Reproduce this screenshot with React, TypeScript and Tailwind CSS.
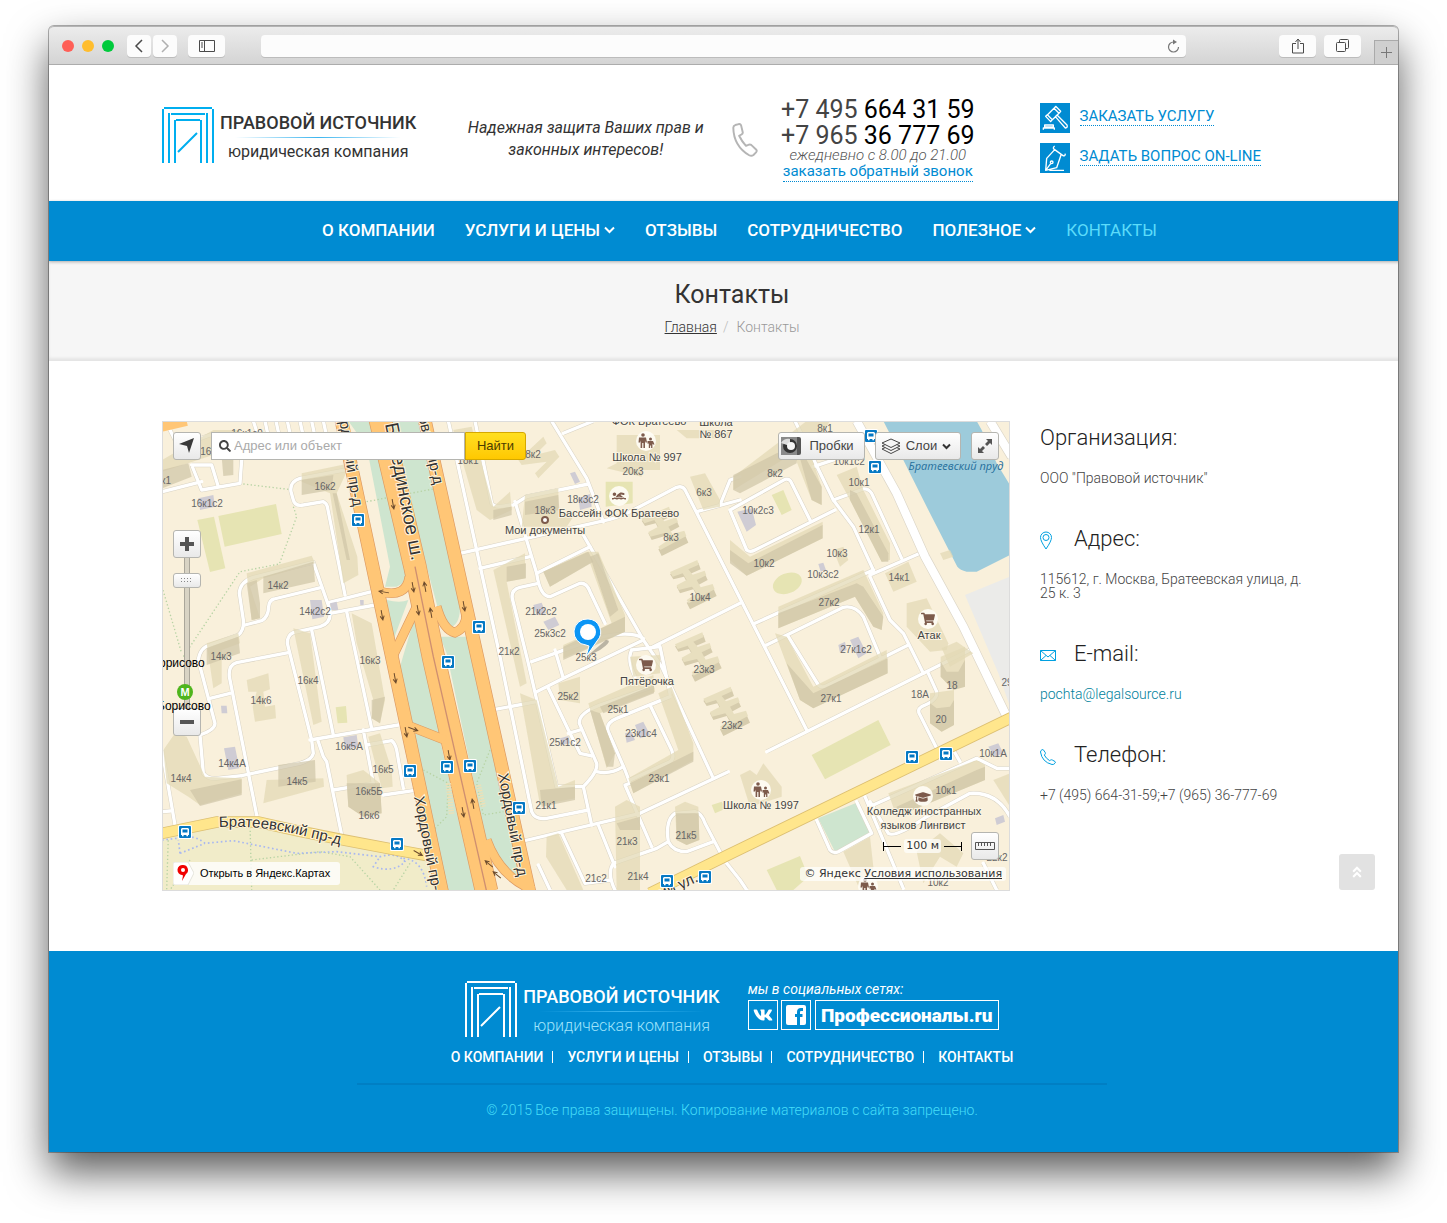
import React from "react";
import { FaSearch, FaVk, FaAngleDoubleUp, FaGraduationCap, FaShoppingCart, FaSwimmer } from "react-icons/fa";

/* ---------- Map data (drawing units: three per map pixel) ---------- */

const greenStrips = [
  "M595,33 L675,33 L770,470 Q775,520 740,530 L705,530 L720,470 L650,110Z",
  "M715,33 L805,33 L930,590 Q930,640 905,650 Q880,640 865,600 L830,470Z",
  "M710,570 Q750,580 775,570 L730,690Z",
  "M800,600 L880,980 L785,940 L750,770Z",
  "M870,680 L965,680 L1140,1440 Q1040,1400 1010,1300 L890,730Z",
  "M775,965 L870,990 L975,1440 L885,1440Z",
  "M2005,1225 L2120,1178 L2165,1270 L2055,1325Z",
];

const fields = [
  "142,330 192,320 226,475 180,486",
  "205,318 378,282 395,372 224,410",
  "557,892 588,888 592,938 563,940",
  "1865,255 1900,240 1925,300 1895,315",
  "1985,1035 2185,930 2222,1005 2025,1108",
  "1850,1380 1950,1338 1975,1400 1930,1440 1880,1440",
  "1685,1185 1715,1175 1730,1195 1695,1210",
  "1367,215 1448,215 1448,280 1367,290",
];

const roofs = [
  "37,150 190,60 270,60 250,115 37,185",
  "455,190 600,160 590,185 560,250 622,440 625,495 580,520 540,250 455,215",
  "290,490 485,437 495,460 340,505 300,530 330,625 305,630",
  "170,700 265,670 270,700 215,720 215,820 190,835",
  "605,610 665,640 705,870 690,940 665,925 670,870 620,700",
  "430,655 480,670 515,935 490,945",
  "40,1020 75,970 110,980 165,1100 275,1105 275,1150 150,1185 115,1160 50,1120",
  "350,1110 520,1105 522,1130 340,1180",
  "290,810 355,790 360,838 340,845 345,890 375,885 378,925 315,935 308,890 320,845 295,845",
  "655,980 690,970 725,1080 728,1130 695,1135",
  "590,1095 640,1080 690,1120 695,1210 640,1220 595,1190",
  "910,60 965,50 1030,290 1080,245 1085,300 1020,330 980,300",
  "1105,150 1180,80 1190,100 1155,135 1215,120 1228,140 1165,205 1155,190 1190,155 1115,165",
  "1125,255 1225,235 1225,300 1270,320 1250,350 1115,350",
  "1400,75 1530,75 1530,180 1475,180 1475,200 1370,175 1400,160",
  "1580,60 1740,60 1740,85 1610,85",
  "1620,200 1665,190 1710,270 1710,290 1660,300",
  "1180,485 1310,425 1345,425 1425,615 1425,665 1240,745 1240,705 1385,640 1320,460 1200,530",
  "1030,480 1125,430 1125,505 1070,515 1130,820 1110,830",
  "1110,850 1160,870 1225,1130 1275,1110 1275,1165 1170,1185",
  "1225,820 1290,800 1290,880 1230,870",
  "1315,880 1510,795 1515,845 1350,910 1395,1030 1370,1075",
  "1440,740 1530,735 1530,790 1450,800",
  "1525,850 1565,830 1630,1000 1630,1050 1450,1150 1435,1105 1585,1020",
  "1395,1190 1430,1170 1470,1190 1470,1440 1400,1440",
  "1575,1190 1605,1175 1645,1190 1648,1290 1610,1305 1580,1290",
  "1190,1280 1225,1270 1300,1440 1250,1440 1188,1340",
  "1970,33 2040,33 1980,130 2015,230 2015,285 1985,270 1930,130 1750,240 1750,200",
  "1740,390 1800,440 2018,335 2018,385 1790,497 1740,450",
  "2060,195 2120,170 2140,240 2220,400 2220,450 2195,455 2100,270",
  "2050,420 2080,410 2095,450 2070,470",
  "1885,590 2140,480 2200,610 2195,660 2170,650 2115,560 1885,655",
  "2205,490 2275,455 2300,515 2230,545",
  "2270,580 2330,565 2395,700 2390,720 2340,725 2270,650",
  "1875,670 1910,680 1990,830 2210,720 2213,790 1990,895 1950,870",
  "2372,740 2445,710 2445,830 2410,840 2372,800",
  "2340,850 2412,840 2412,945 2375,965 2340,940",
  "1770,1095 1800,1080 1820,1095 1840,1060 1895,1130 1895,1160 1800,1190",
  "2215,1150 2480,1050 2505,1065 2505,1110 2240,1220",
  "2530,1110 2580,1090 2580,1190",
  "2080,1325 2160,1280 2170,1370 2160,1440 2130,1440",
  "2300,1325 2370,1270 2440,1330 2420,1370 2370,1340 2320,1420",
  "2370,430 2400,420 2410,440 2380,450",
  "2375,715 2420,695 2470,730 2400,770",
];

const walls = [
  "37,180 115,160 125,200 37,235",
  "215,140 250,140 250,195 220,198",
  "455,210 550,195 545,240 455,255",
  "548,250 560,250 600,450 590,450",
  "340,500 490,455 495,515 340,550",
  "290,520 320,510 330,580 330,625 305,630",
  "170,715 265,680 270,730 170,765",
  "120,1140 275,1108 275,1155 150,1188",
  "385,1065 495,1050 497,1115 385,1130",
  "590,1120 690,1120 695,1210 640,1220 595,1190",
  "665,870 705,860 690,940 665,925",
  "1125,275 1225,255 1228,300 1125,315",
  "1030,300 1085,290 1085,315 1030,330",
  "1070,470 1128,460 1128,505 1070,515",
  "1180,485 1315,425 1330,455 1200,530",
  "1320,440 1345,430 1405,600 1380,620",
  "1240,710 1425,620 1425,665 1240,750",
  "1320,900 1350,910 1395,1030 1390,1070 1370,1070",
  "1350,890 1512,825 1512,850 1360,910",
  "1440,1120 1630,1025 1630,1055 1450,1150",
  "1170,1140 1275,1130 1275,1170 1175,1190",
  "1400,1240 1470,1220 1470,1260 1410,1260",
  "1578,1210 1646,1210 1648,1290 1610,1305 1580,1290",
  "1950,145 1970,150 2015,230 2015,285 1985,270",
  "1750,195 1880,130 1940,110 1940,160 1770,250 1750,240",
  "1740,420 1795,460 2018,345 2018,385 1790,497 1740,460",
  "2100,240 2120,250 2215,430 2215,455 2195,455 2100,270",
  "1885,610 2120,520 2140,530 2200,620 2195,660 2170,650 2115,560 1885,655",
  "1910,760 1990,850 2213,745 2213,790 1990,895 1950,870",
  "2372,755 2390,785 2425,785 2445,750 2445,830 2410,840 2372,800",
  "2340,880 2360,895 2400,890 2412,870 2412,945 2375,965 2340,940",
  "2240,1190 2480,1080 2505,1070 2505,1110 2240,1220",
];

const annexes = [
  "480,570 515,570 522,620 487,628",
  "540,580 560,575 565,600 545,600",
  "630,570 641,570 641,585 631,585",
  "145,265 190,255 195,290 150,300",
  "213,887 230,887 232,910 215,910",
  "222,1015 255,1010 268,1075 235,1080",
  "580,982 620,975 625,1010 585,1020",
  "1260,190 1275,185 1290,215 1275,222",
  "1180,635 1215,620 1228,645 1195,660",
  "1150,585 1175,578 1188,610 1160,615",
  "1285,265 1320,252 1325,290 1290,300",
  "1455,945 1480,935 1500,975 1470,985",
  "1425,970 1445,965 1455,990 1430,998",
  "1762,305 1805,295 1818,345 1790,365",
  "2005,462 2020,458 2028,480 2012,485",
  "2100,690 2125,680 2150,730 2125,745",
  "2065,705 2085,695 2090,720 2070,728",
  "2515,1010 2545,1000 2560,1030 2535,1040",
  "2535,1225 2560,1215 2565,1235 2540,1245",
  "1230,985 1255,978 1260,1000 1235,1005",
];

/* Short comb-shaped blocks repeated over the district. */
const combs = [
  [1475, 290],
  [1560, 450],
  [1575, 667],
  [1660, 830],
];

const streets = [
  "M36,245 L155,215 M125,165 L155,240 L270,220 L275,150 M125,165 L185,165 L205,230",
  "M60,60 L85,110 L180,75 L230,75",
  "M310,33 L325,80 M345,33 L355,80 M378,33 L388,80 M412,33 L422,80 M450,33 L460,80 M485,33 L495,80 M520,33 L530,80",
  "M595,178 L450,205 Q418,215 423,245 L430,270 Q435,290 460,285 L520,275 Q530,280 532,290 L585,555",
  "M665,545 L535,578 M675,585 L540,610",
  "M145,750 Q150,712 180,705 L265,675 Q283,660 280,630 L268,550 Q270,515 310,502 L490,457 L540,600 Q545,640 510,650 L430,668 Q412,675 412,700 L485,990 L490,1030 Q485,1050 450,1060 L275,1097",
  "M285,645 L335,632 Q355,622 356,590 Q358,570 372,567 L515,532",
  "M590,605 L665,955 M485,660 L550,975",
  "M145,750 L195,940 Q195,960 150,975 L160,1090 Q175,1108 200,1105 L275,1097 M180,865 L240,850",
  "M415,728 L260,758 Q235,765 238,800 L320,1215",
  "M480,990 L745,945 M505,995 L520,1040 L530,1055 L575,1275 M550,1140 L670,1120 L640,960 M650,1005 L725,992 Q735,1000 740,1020 L760,1135 M700,1155 L790,1142",
  "M36,1020 L75,1245 M36,1205 L60,1203",
  "M895,33 L1050,740 L1145,1205 Q1155,1230 1190,1225 L1315,1200",
  "M975,33 L1025,280 Q1035,295 1080,285",
  "M930,430 L1350,335 Q1400,325 1440,305 L1580,232 Q1600,225 1608,245 L1970,960",
  "M1095,275 L1160,490 Q1170,560 1200,560 L1290,520 Q1310,518 1320,545 L1365,640",
  "M1090,285 L1130,260 L1315,222 M1205,33 L1310,205 L1360,335 M1240,70 L1330,33",
  "M1300,375 L1320,410 L1480,690 L1535,770 L1690,1105",
  "M1160,490 L1320,410 M990,475 L1140,440 M1165,520 L1110,532 Q1080,540 1088,570 L1135,760 L1220,1130 L1300,1130",
  "M1510,710 L1770,580 M1145,755 L1340,685 Q1440,660 1480,685 M1160,845 L1240,805 L1480,690 M1215,720 L1240,805",
  "M1035,898 L1160,875 M1195,835 L1260,970 L1290,1030 L1325,1038 M1255,970 L1290,960",
  "M1510,830 L1350,885 Q1285,910 1288,940 L1340,1060 Q1345,1085 1300,1130 L1325,1245 M1340,1085 Q1380,1095 1420,1070",
  "M1560,860 L1400,925 Q1365,940 1375,965 L1425,1080 L1440,1120 L1425,1125 L1505,1310 M1440,1110 L1560,1055 Q1575,1045 1565,1020 L1500,885",
  "M1120,1293 L1470,1210 L1735,1085 M1345,1245 L1395,1370 M1390,1360 L1520,1315 L1555,1295 M1555,1295 Q1545,1230 1575,1210 L1635,1205 Q1655,1210 1665,1240 L1715,1335 M1555,1295 Q1570,1325 1610,1325 L1690,1295",
  "M1235,1270 L1305,1420 L1380,1410 M1165,1365 L1200,1440 M1390,1360 Q1370,1390 1395,1440 M1730,1360 L1770,1410 L1790,1440",
  "M1445,720 Q1430,750 1455,800 M1445,720 L1530,710 L1560,850",
  "M1935,33 L2050,270 L2110,350 L2170,480 M2160,500 L2220,630 L2260,670 L2320,790",
  "M1990,170 L2140,120 M1740,300 L1905,208 Q1920,205 1925,220 L1980,330 M1740,300 L1790,420 Q1800,428 1815,420 L2055,300 M2050,270 L2140,237 Q2155,235 2165,250 L2255,445",
  "M2160,495 L2310,430 M1815,640 L2170,480 M1850,705 L2080,592 Q2115,585 2140,620 L2190,740 M1915,680 L2005,825 Q2015,835 2030,827 L2275,705",
  "M1850,1025 L2320,790 L2460,720 M2335,790 L2360,845 Q2365,870 2315,890 Q2300,900 2310,915 L2360,1015 M2410,1020 L2430,1055",
  "M2120,1175 L2165,1270 L2065,1325 Q2050,1332 2040,1320 L2000,1230 M2145,1160 L2260,1435 M2160,1175 L2215,1270 Q2235,1285 2330,1220 L2460,1150 Q2540,1145 2580,1220 M2170,1185 L2480,1045 L2540,1075 L2580,1075",
  "M1640,305 L1770,270 M1710,285 L1740,210 L1770,200 M2500,1360 L2540,1440",
];

const paths = [
  "M280,222 L415,238 M430,290 L440,320 L388,462 L270,485 L100,740 M36,530 L95,730",
  "M650,275 L860,235",
  "M55,1280 L50,1440 M300,1240 L305,1440 M305,1350 L510,1325 L600,1340 L690,1440 M120,1350 L60,1440 M780,1360 L730,1440",
  "M1020,1020 L980,1120 L1000,1215 L1060,1205 M820,1080 L895,1120 L890,1220 L850,1260",
];

const labels: [string, number, number][] = [
  ["16к1с2", 207, 507], ["16к2", 325, 490], ["14к2", 278, 589], ["14к2с2", 315, 615], ["14к3", 221, 660],
  ["16к3", 370, 664], ["16к4", 308, 684], ["14к6", 261, 704], ["16к5А", 349, 750], ["14к4А", 232, 767],
  ["16к5", 383, 773], ["14к4", 181, 782], ["14к5", 297, 785], ["16к5Б", 369, 795], ["16к6", 369, 819],
  ["18к3с2", 583, 503], ["18к3", 545, 514], ["20к3", 633, 475], ["6к3", 704, 496], ["8к3", 671, 541],
  ["10к4", 700, 601], ["21к2с2", 541, 615], ["25к3с2", 550, 637], ["21к2", 509, 655], ["25к3", 586, 661],
  ["23к3", 704, 673], ["25к2", 568, 700], ["25к1", 618, 713], ["23к2", 732, 729], ["23к1с4", 641, 737],
  ["25к1с2", 565, 746], ["23к1", 659, 782], ["21к1", 546, 809], ["21к3", 627, 845], ["21к5", 686, 839],
  ["21к4", 638, 880], ["21с2", 596, 882], ["8к2", 533, 458], ["8к1", 825, 432], ["8к2", 775, 477],
  ["10к1с2", 849, 465], ["10к1", 859, 486], ["10к2с3", 758, 514], ["12к1", 869, 533], ["10к3", 837, 557],
  ["10к2", 764, 567], ["10к3с2", 823, 578], ["14к1", 899, 581], ["27к2", 829, 606], ["27к1с2", 856, 653],
  ["27к1", 831, 702], ["18", 952, 689], ["18А", 920, 698], ["20", 941, 723], ["10к1А", 993, 757],
  ["10к1", 946, 794], ["29", 1007, 686], ["10к2", 938, 886], ["18к1", 468, 464], ["16к", 208, 455],
  ["16к1с9", 247, 437], ["к1", 166, 484], ["22к2", 997, 861],
];

const places: [string, number, number][] = [
  ["ФОК Братеево", 649, 425], ["Школа", 716, 426], ["№ 867", 716, 438], ["Школа № 997", 647, 461],
  ["Бассейн ФОК Братеево", 619, 517], ["Мои документы", 545, 534], ["Пятёрочка", 647, 685],
  ["Атак", 929, 639], ["Школа № 1997", 761, 809], ["Колледж иностранных", 924, 815], ["языков Лингвист", 923, 829],
];

const stops = [
  [358, 520], [479, 627], [448, 662], [447, 767], [470, 766], [410, 771], [519, 808], [185, 832],
  [397, 844], [667, 881], [705, 877], [912, 757], [946, 754], [871, 436], [875, 467],
];

const arrows = [
  [393, 504, 170], [384, 592, 280], [413, 587, 170], [425, 587, -10], [418, 610, 170], [431, 613, -10],
  [382, 615, 170], [395, 678, 170], [406, 732, 170], [413, 729, 110], [464, 606, 170], [449, 755, 170],
  [463, 812, 170], [473, 804, -10], [489, 864, -50], [497, 875, -50], [418, 853, 120],
];

function School({ x, y }: { x: number; y: number }) {
  return (
    <g transform={`translate(${x} ${y})`}>
      <circle r="10" fill="#fffdf6" opacity="0.9" />
      <g fill="#7d5b4c">
        <circle cx="-3" cy="-6" r="1.8" />
        <path d="M-7,-3.5 h7 l1,5 h-1.5 l-.5,-2 v7.5 h-1.6 v-5 h-1.2 v5 h-1.6 v-7.5 l-.6,2 h-1.5z" />
        <circle cx="4.5" cy="-2" r="1.5" />
        <path d="M1.5,0 h5.5 l1.5,3.5 h-1.5 l-.6,-1 v4.5 h-1.3 v-2.5 h-1 v2.5 h-1.3 v-4.5 l-1.3,.2z" />
      </g>
    </g>
  );
}

function BusStop({ x, y }: { x: number; y: number }) {
  return (
    <g transform={`translate(${x} ${y})`}>
      <rect x="-7" y="-7" width="14" height="14" rx="1.5" fill="#fff" />
      <rect x="-6" y="-6" width="12" height="12" rx="1" fill="#0679c4" />
      <path d="M-3,-4 h6 l1,1 v6 h-1 v1.300 h-1.600 v-1.300 h-2.800 v1.300 h-1.600 v-1.300 h-1 v-6z" fill="#fff" />
      <rect x="-2.500" y="-2.500" width="5" height="3" fill="#0679c4" />
    </g>
  );
}

function MapDrawing() {
  return (
    <svg
      className="absolute inset-0 h-full w-full"
      viewBox="163 422 846 468"
      preserveAspectRatio="xMinYMin slice"
      role="img"
      aria-label="Карта района Братеево"
    >
      <rect x="162" y="421" width="848" height="470" fill="#f9f0db" />
      <g transform="translate(150 410) scale(0.333333)" fill="none">
        <path d="M36,1270 L200,1240 L340,1240 L850,1350 L890,1440 L36,1440Z" fill="#f1ecc9" />
        <path d="M2445,555 L2580,500 L2580,890 L2545,790Z" fill="#ebebe9" />
        <path d="M2200,33 L2480,33 L2495,60 L2540,160 L2580,225 L2580,435 L2480,485 L2450,485 Q2430,480 2422,470 L2340,310 L2260,150Z" fill="#9dcbdb" />
        {greenStrips.map((d) => <path key={d} d={d} fill="#cee5cf" />)}
        {fields.map((p) => <polygon key={p} points={p} fill="#e6e4b3" />)}
        <ellipse cx="1912" cy="520" rx="45" ry="30" fill="#e6e4b3" transform="rotate(-22 1912 520)" />
        <g strokeWidth="4" strokeDasharray="4 7" stroke="#b7d3a4">
          {paths.map((d) => <path key={d} d={d} />)}
        </g>
        <path d="M36,1290 L80,1285 Q130,1270 165,1300 L250,1292 L440,1330 L560,1325 L690,1340 Q740,1325 765,1355 Q730,1390 670,1370 L690,1340 M90,1330 L165,1300 M90,1330 L85,1290 M760,1345 Q820,1350 830,1430" stroke="#a9b8f0" strokeWidth="5" strokeDasharray="5 8" />
        <g stroke="#d9d3c4" strokeWidth="13" strokeLinejoin="round">
          {streets.map((d) => <path key={d} d={d} />)}
        </g>
        <g stroke="#fff" strokeWidth="10" strokeLinejoin="round" strokeLinecap="round">
          {streets.map((d) => <path key={d} d={d} />)}
        </g>
        <path d="M2120,33 L2240,250 L2325,440 L2440,650 L2575,930 M2520,33 L2585,140" stroke="#dcd6c8" strokeWidth="29" />
        <path d="M2120,33 L2240,250 L2325,440 L2440,650 L2575,930 M2520,33 L2585,140" stroke="#fff" strokeWidth="25" />
        <g fill="#e3d9b6" fillOpacity="0.75">
          {roofs.map((p) => <polygon key={p} points={p} />)}
        </g>
        <g fill="#cfc5a6" fillOpacity="0.7">
          {walls.map((p) => <polygon key={p} points={p} />)}
        </g>
        {combs.map(([x, y]) => (
          <g key={`${x}-${y}`} transform={`translate(${x} ${y})`}>
            <path d="M0,42 L85,8 L92,28 L60,42 L68,55 L105,42 L113,60 L85,75 L95,95 L130,85 L140,108 L60,148 L50,128 L82,110 L70,88 L30,100 L20,80 L50,65 L42,50 L10,58Z" fill="#d6ccad" />
            <path d="M0,36 L82,0 L86,14 L55,28 L68,44 L104,32 L109,46 L80,60 L92,82 L128,72 L134,88 L56,130 L50,120 L80,100 L66,80 L26,90 L20,76 L50,60 L38,40 L8,50Z" fill="#e8dfbf" />
          </g>
        ))}
        {annexes.map((p) => <polygon key={p} points={p} fill="#cfccd4" />)}

        <path d="M36,1270 L200,1236 L325,1236 L450,1264 L570,1288 L740,1320 L850,1340 M1500,1450 L1740,1332 L2590,920" stroke="#dcbf72" strokeWidth="35" />
        <path d="M36,1270 L200,1236 L325,1236 L450,1264 L570,1288 L740,1320 L850,1340 M1500,1450 L1740,1332 L2590,920" stroke="#ffe68c" strokeWidth="30" />
        <path d="M36,50 L110,33" stroke="#ffc676" strokeWidth="30" />

        <g stroke="#dc9a63">
          <path d="M573,25 L876,1445 M823,25 L1138,1445" strokeWidth="41" />
          <path d="M690,545 Q770,565 778,500 M800,590 L728,740 M770,945 L885,990 M860,590 Q880,660 915,668 Q955,650 948,600 M1010,1290 Q1050,1400 1150,1440" strokeWidth="29" />
          <path d="M690,25 L795,470 L850,740 L1010,1445" strokeWidth="70" />
        </g>
        <g stroke="#ffc676">
          <path d="M690,25 L795,470 L850,740 L1010,1445" strokeWidth="66" />
          <path d="M573,25 L876,1445 M823,25 L1138,1445" strokeWidth="37" />
          <path d="M690,545 Q770,565 778,500 M800,590 L728,740 M770,945 L885,990 M860,590 Q880,660 915,668 Q955,650 948,600 M1010,1290 Q1050,1400 1150,1440" strokeWidth="25" />
        </g>
        <path d="M795,470 L850,740 L1010,1445" stroke="#cf8f70" strokeWidth="4" />
        <path d="M895,1120 L905,1215 M985,1125 L1000,1190" stroke="#efe0b5" strokeWidth="16" strokeDasharray="4 4" />
      </g>

      <g stroke="#6b4a2c" strokeWidth="1" fill="none">
        {arrows.map(([x, y, r]) => (
          <path key={`${x}-${y}`} d="M0,5 V-5 M-2,-1 L0,-5 L2,-1" transform={`translate(${x} ${y}) rotate(${r})`} />
        ))}
      </g>

      <g className="font-['Liberation_Sans',sans-serif] text-[10px]" fill="#666" textAnchor="middle">
        {labels.map(([t, x, y]) => <text key={`${t}${x}`} x={x} y={y}>{t}</text>)}
      </g>

      {[[619, 496], [646, 665], [928, 619], [923, 796]].map(([x, y]) => (
        <circle key={`${x}`} cx={x} cy={y} r="10" fill="#fffdf6" opacity="0.9" />
      ))}
      <School x={646} y={441} />
      <School x={761} y={790} />
      <School x={868} y={886} />
      <FaSwimmer x={612} y={489} size={14} color="#7d5b4c" />
      <FaShoppingCart x={639} y={658} size={14} color="#7d5b4c" />
      <FaShoppingCart x={921} y={612} size={14} color="#7d5b4c" />
      <FaGraduationCap x={915} y={789} size={16} color="#7d5b4c" />
      <circle cx="545" cy="520" r="3" fill="#fff" stroke="#7d5b4c" strokeWidth="2" />

      <g
        className="font-['Liberation_Sans',sans-serif] text-[11px]"
        fill="#444" stroke="#fbf4e2" strokeWidth="2" paintOrder="stroke" textAnchor="middle"
      >
        {places.map(([t, x, y]) => <text key={`${t}${y}`} x={x} y={y}>{t}</text>)}
      </g>
      <g
        className="font-['Liberation_Sans',sans-serif] text-[15px]"
        fill="#333" stroke="#fff4dc" strokeWidth="2" paintOrder="stroke"
      >
        <text transform="translate(385 424) rotate(79)" className="text-[19px]">Бесединское ш.</text>
        <text transform="translate(353 507) rotate(81)" textAnchor="end">Хордовый пр-д</text>
        <text transform="translate(434 485) rotate(77)" textAnchor="end">Хордовый пр-д</text>
        <text transform="translate(414 797) rotate(79)">Хордовый пр-д</text>
        <text transform="translate(498 774) rotate(79)">Хордовый пр-д</text>
        <text transform="translate(699 881) rotate(-25)" textAnchor="end">Братеевский ул.</text>
        <path id="brateevsky" d="M219,827 Q258,825 300,835 T350,847" fill="none" stroke="none" />
        <text><textPath href="#brateevsky">Братеевский пр-д</textPath></text>
      </g>
      <text x="956" y="470" textAnchor="middle" fill="#256f9b" className="font-['Open_Sans',sans-serif] text-[11px] italic">Братеевский пруд</text>
      {stops.map(([x, y]) => <BusStop key={`${x}-${y}`} x={x} y={y} />)}

      <path d="M586,657 L606,640 Q614,640 600,650Z" fill="#000" opacity="0.25" />
      <path d="M588,619 a13,13 0 0 0 -2,26 l3,1 -3,11 11,-16 a13,13 0 0 0 -9,-22z" fill="#0b95f5" stroke="#fff" strokeWidth="1" />
      <circle cx="588" cy="632" r="8" fill="#fff" />
    </svg>
  );
}

/* ---------- Brand ---------- */

function Logo({ light = false }: { light?: boolean }) {
  return (
    <a href="#home" className="flex w-fit items-start gap-[6px]">
      <svg width="52" height="56" viewBox="0 0 52 56" fill="none" stroke={light ? "#fff" : "#00aeef"} strokeWidth="2">
        <path d="M1,56 V2 M51,56 V2 M2,1 H50 M7,56 V6 M45,56 V6 M9,7 H43 M13,56 V13 M39,56 V13 M14,13 H38 M16,45 L35,26" />
      </svg>
      <span className={light ? "flex flex-col items-center pt-[5px] text-white" : "flex flex-col items-center pt-[5px] text-[#333]"}>
        <span className="text-[18px] leading-[22px] font-medium whitespace-nowrap">ПРАВОВОЙ ИСТОЧНИК</span>
        <span className="mt-[3px] h-px w-[166px] bg-linear-to-r from-transparent via-[#3cb5ef] to-transparent" />
        <span className={light ? "mt-[3px] text-[16px] leading-[22px] font-light text-[#9fe3fb]" : "mt-[3px] text-[16px] leading-[22px]"}>юридическая компания</span>
      </span>
    </a>
  );
}

function Handset({ className }: { className: string }) {
  return (
    <svg className={className} viewBox="0 0 80 104" fill="none" stroke="currentColor" strokeWidth="6" strokeLinejoin="round">
      <path d="M4,14 Q4,8 10,6 L21,3 Q26,2 28,7 L33,28 Q34,33 29,35 L22,39 Q30,56 43,70 L50,67 Q55,64 59,67 L74,81 Q78,85 74,90 L66,98 Q60,103 53,99 Q5,70 4,14Z" />
    </svg>
  );
}

/* ---------- Browser frame ---------- */

function BrowserBar() {
  const btn = "flex h-[22px] items-center justify-center rounded-[4px] bg-[#fcfcfc] shadow-[0_1px_0_#bcbcbc]";
  return (
    <div className="relative flex h-[39px] items-center rounded-t-[5px] border-t border-b border-t-[#b4b4b4] border-b-[#acacac] bg-linear-to-b from-[#ececec] to-[#d4d4d4] pl-[13px]">
      <span className="h-3 w-3 rounded-full bg-[#ff5f57]" />
      <span className="ml-2 h-3 w-3 rounded-full bg-[#ffbd2e]" />
      <span className="ml-2 h-3 w-3 rounded-full bg-[#00ca3c]" />
      <button aria-label="Назад" className={`${btn} ml-[13px] w-6`}>
        <svg width="10" height="14" fill="none" stroke="#4a4a4a" strokeWidth="1.5"><path d="M8,1 L2,7 L8,13" /></svg>
      </button>
      <button aria-label="Вперёд" className={`${btn} ml-[2px] w-6`}>
        <svg width="10" height="14" fill="none" stroke="#b0b0b0" strokeWidth="1.5"><path d="M2,1 L8,7 L2,13" /></svg>
      </button>
      <button aria-label="Боковая панель" className={`${btn} ml-[11px] w-[37px]`}>
        <svg width="16" height="12" fill="none" stroke="#4a4a4a"><path d="M.5,.5 h15 v11 h-15z M5.500,.5 v11 M2,3 h2 M2,5 h2 M2,7 h2" /></svg>
      </button>
      <label className={`${btn} ml-9 w-full max-w-[925px] flex-1`}>
        <input aria-label="Адресная строка" className="h-full min-w-0 flex-1 bg-transparent px-2 text-xs outline-none" />
        <svg className="mr-[6px]" width="13" height="14" fill="none" stroke="#777" strokeWidth="1.2"><path d="M6.500,3 A5,5 0 1 0 11.500,8" /><path d="M6,.5 L10,3 L6,5.500Z" fill="#777" stroke="none" /></svg>
      </label>
      <button aria-label="Поделиться" className={`${btn} mr-2 ml-auto w-[37px]`}>
        <svg width="12" height="16" fill="none" stroke="#4a4a4a"><path d="M4,5.500 H.5 v9.500 h11 V5.500 H8 M6,11 V1.500 M3.500,4 L6,1 L8.500,4" /></svg>
      </button>
      <button aria-label="Вкладки" className={`${btn} mr-[37px] w-[37px]`}>
        <svg width="13" height="13" fill="none" stroke="#4a4a4a"><rect x=".5" y="3.500" width="9" height="9" rx="1" /><path d="M3.500,3 V1.500 a1,1 0 0 1 1,-1 h7 a1,1 0 0 1 1,1 v7 a1,1 0 0 1 -1,1 h-1.500" /></svg>
      </button>
      <button aria-label="Новая вкладка" className="absolute right-0 bottom-0 flex h-6 w-6 items-center justify-center border-t border-l border-[#aaa] bg-[#cfcfcf]">
        <svg width="12" height="12" stroke="#777"><path d="M5.500,0 v11 M0,5.500 h11" /></svg>
      </button>
    </div>
  );
}

/* ---------- Map panel ---------- */

const mapBtn = "flex h-7 items-center justify-center rounded-[3px] border border-[#b5b5b0] bg-linear-to-b from-white to-[#e9e9e9]";

function MapPanel() {
  return (
    <section aria-label="Карта" className="relative h-[470px] overflow-hidden border border-[#dcdcdc]">
      <MapDrawing />

      <div className="absolute top-[10px] left-[10px] flex">
        <button aria-label="Моё местоположение" className={`${mapBtn} w-7`}>
          <svg width="16" height="16"><path d="M15,0 L10,15 L8,8 L0,6Z" fill="#3a3a3a" /></svg>
        </button>
        <form className="ml-[10px] flex" onSubmit={(e) => e.preventDefault()}>
          <label className="flex h-7 w-[254px] items-center border border-[#b5b5b0] bg-white pl-[7px]">
            <FaSearch size={12} color="#444" />
            <input type="text" aria-label="Адрес или объект" placeholder="Адрес или объект" className="ml-[3px] min-w-0 flex-1 font-['Liberation_Sans',sans-serif] text-[13px] outline-none placeholder:text-[#aaa]" />
          </label>
          <button className="h-7 w-[61px] rounded-r-[3px] border border-[#d5a800] bg-linear-to-b from-[#ffdf1f] to-[#ffc800] font-['Liberation_Sans',sans-serif] text-[13px] text-[#4a3c00]">Найти</button>
        </form>
      </div>

      <div className="absolute top-[10px] right-[10px] flex gap-[10px] font-['Liberation_Sans',sans-serif] text-[13px] text-[#444]">
        <button className={`${mapBtn} w-[87px] gap-2 pr-2`}>
          <svg width="20" height="18"><rect width="20" height="18" rx="2" fill="#555" /><rect x="0" width="16" height="18" fill="#8a8a8a" /><circle cx="9" cy="9" r="7" fill="#333" /><path d="M9,9 L0,6 A9,9 0 0 1 9,2Z" fill="#ddd" /><circle cx="10" cy="9" r="4" fill="#f5f5f5" /></svg>
          Пробки
        </button>
        <button className={`${mapBtn} w-[86px] gap-[5px] pr-1`}>
          <svg width="20" height="16" fill="#f5f5f5" stroke="#444"><path d="M10,7 l9,4 -9,4.500 -9,-4.500z" /><path d="M10,4 l9,4 -9,4.500 -9,-4.500z" /><path d="M10,1 l9,4 -9,4.500 -9,-4.500z" /></svg>
          Слои
          <svg width="9" height="7" fill="none" stroke="#333" strokeWidth="2"><path d="M1,1.500 L4.500,5 L8,1.500" /></svg>
        </button>
        <button aria-label="На весь экран" className={`${mapBtn} w-7`}>
          <svg width="16" height="16" fill="#555"><path d="M9,1 h6 v6 l-2,-2 -3,3 -2,-2 3,-3z M7,15 h-6 v-6 l2,2 3,-3 2,2 -3,3z" /></svg>
        </button>
      </div>

      <div className="absolute top-[108px] left-[10px] flex w-7 flex-col items-center">
        <button aria-label="Приблизить" className={`${mapBtn} w-7`}>
          <svg width="14" height="14"><path d="M5,0 h4 v5 h5 v4 h-5 v5 h-4 v-5 h-5 v-4 h5z" fill="#555" /></svg>
        </button>
        <div className="relative flex h-[150px] w-7 justify-center">
          <span className="h-full w-[6px] border-x border-[#aaa69a] bg-[#d8d3c4]" />
          <span className="absolute top-[15px] flex h-[15px] w-7 items-center justify-center rounded-[3px] border border-[#b5b5b0] bg-linear-to-b from-white to-[#e9e9e9]">
            <svg width="12" height="5" fill="#888"><path d="M0,0h1v1h-1z M3,0h1v1h-1z M6,0h1v1h-1z M9,0h1v1h-1z M0,3h1v1h-1z M3,3h1v1h-1z M6,3h1v1h-1z M9,3h1v1h-1z" /></svg>
          </span>
          <input type="range" aria-label="Масштаб" min={0} max={17} defaultValue={15} className="absolute inset-0 h-full w-full opacity-0 [direction:rtl] [writing-mode:vertical-lr]" />
        </div>
        <button aria-label="Отдалить" className={`${mapBtn} w-7`}>
          <svg width="14" height="4"><rect width="14" height="4" fill="#555" /></svg>
        </button>
      </div>
      <span className="absolute top-[234px] left-[-4px] font-['Liberation_Sans',sans-serif] text-[12px] leading-[14px] text-black">орисово</span>
      <span className="absolute top-[262px] left-[14px] flex h-4 w-4 items-center justify-center rounded-full bg-[#4fb51d] font-['Liberation_Sans',sans-serif] text-[11px] leading-4 font-bold text-white">М</span>
      <span className="absolute top-[277px] left-[-6px] font-['Liberation_Sans',sans-serif] text-[12px] leading-[14px] text-black">Борисово</span>

      <a href="#yandex" className="absolute bottom-[5px] left-[10px] flex h-[23px] items-center rounded-[3px] bg-white/80 pr-[10px] font-['Liberation_Sans',sans-serif] text-[11px] text-black">
        <svg className="mr-[6px]" width="21" height="23"><path d="M0,2 Q0,0 2,0 H15 L21,11 L15,23 H2 Q0,23 0,21Z" fill="#fff" stroke="#e5e5dc" /><path d="M10,3 a5,5 0 0 0 -1,10 l1,.5 -1,5.500 4,-7 a5,5 0 0 0 -3,-9z" fill="#f00000" /><circle cx="10" cy="8" r="2" fill="#fff" /></svg>
        Открыть в Яндекс.Картах
      </a>

      <div className="absolute right-[10px] bottom-[30px] flex items-center gap-[9px] font-['DejaVu_Sans',sans-serif] text-[11px] text-[#333]">
        <span className="flex items-center gap-[3px]">
          <svg width="18" height="9" stroke="#000"><path d="M.5,0 v9 M0,4.500 h18" /></svg>
          <span className="rounded-[3px] bg-white/70 px-[2px] leading-[14px]">100 м</span>
          <svg width="18" height="9" stroke="#000"><path d="M17.500,0 v9 M0,4.500 h18" /></svg>
        </span>
        <button aria-label="Измерить расстояние" className={`${mapBtn} w-7`}>
          <svg width="20" height="8" fill="none" stroke="#555"><path d="M.5,.5 h19 v7 h-19z M3.500,1 v3 M6.500,1 v3 M9.500,1 v3 M12.500,1 v3 M15.500,1 v3" /></svg>
        </button>
      </div>
      <p className="absolute right-[3px] bottom-[9px] rounded-[3px] bg-white/70 px-[4px] font-['DejaVu_Sans',sans-serif] text-[11px] leading-[14px] text-[#333]">
        © Яндекс <a href="#terms" className="underline">Условия использования</a>
      </p>
    </section>
  );
}

/* ---------- Page ---------- */

const container = "mx-auto w-full max-w-[1170px]";

function Chevron() {
  return <svg width="11" height="8" fill="none" stroke="currentColor" strokeWidth="2"><path d="M1,1.500 L5.500,6 L10,1.500" /></svg>;
}

function Header() {
  return (
    <header className={`${container} grid h-[136px] grid-cols-4`}>
      <div className="px-[15px] pt-[42px]"><Logo /></div>
      <p className="px-[15px] pt-[52px] text-center text-[16px] leading-[22px] text-[#333] italic">Надежная защита Ваших прав и законных интересов!</p>
      <div className="flex items-start">
        <Handset className="mt-[58px] h-[34px] w-[26px] text-[#b5b5b5]" />
        <div className="ml-[23px] flex flex-col items-center pt-[32px] whitespace-nowrap">
          <a href="tel:+74956643159" className="text-[25px] leading-[26px] text-[#444]">+7 495 <span className="text-black">664 31 59</span></a>
          <a href="tel:+79653677769" className="text-[25px] leading-[26px] text-[#444]">+7 965 <span className="text-black">36 777 69</span></a>
          <span className="text-[15px] leading-3 font-light text-[#555] italic">ежедневно с 8.00 до 21.00</span>
          <a href="#callback" className="border-b border-dotted border-[#008bd2] text-[15px] leading-5 text-[#008bd2]">заказать обратный звонок</a>
        </div>
      </div>
      <div className="flex flex-col gap-[10px] px-[15px] pt-[38px] text-[15px] leading-[17px] whitespace-nowrap text-[#008bd2]">
        <a href="#order" className="flex h-[30px] items-start gap-[10px]">
          <svg className="h-[30px] w-[30px] bg-[#008bd2]" viewBox="0 0 90 90" fill="none" stroke="#fff" strokeWidth="4" strokeLinejoin="round">
            <path d="M42,16 L47,10 L62,25 L57,31Z M17,40 L22,35 L37,50 L32,56Z M42,16 L22,36 M57,31 L37,50 M46,41 L51,36 L81,66 Q84,74 76,75Z M14,66 H40 V72 H14Z M10,80 V75 H43 V80" />
          </svg>
          <span className="mt-[5px] border-b border-dotted border-[#008bd2]">ЗАКАЗАТЬ УСЛУГУ</span>
        </a>
        <a href="#ask" className="flex h-[30px] items-start gap-[10px]">
          <svg className="h-[30px] w-[30px] bg-[#008bd2]" viewBox="0 0 90 90" fill="none" stroke="#fff" strokeWidth="4" strokeLinejoin="round">
            <path d="M44,9 Q36,15 44,20 L68,37 Q75,42 76,32 M44,20 L20,46 L17,82 L50,74 L63,36 M17,82 L32,62 M28,82 H72" />
            <circle cx="35" cy="58" r="4" />
          </svg>
          <span className="mt-[5px] border-b border-dotted border-[#008bd2]">ЗАДАТЬ ВОПРОС ON-LINE</span>
        </a>
      </div>
    </header>
  );
}

function Nav() {
  return (
    <nav className="relative z-10 bg-[#008bd2] pl-[15px] shadow-[0_1px_3px_rgba(0,0,0,0.3)]">
      <ul className="flex h-[60px] items-center justify-center gap-[30px] pb-[2px] text-[17px] leading-6 font-medium whitespace-nowrap text-white">
        <li><a href="#about">О КОМПАНИИ</a></li>
        <li><a href="#services" className="flex items-center gap-1">УСЛУГИ И ЦЕНЫ <Chevron /></a></li>
        <li><a href="#reviews">ОТЗЫВЫ</a></li>
        <li><a href="#partners">СОТРУДНИЧЕСТВО</a></li>
        <li><a href="#useful" className="flex items-center gap-1">ПОЛЕЗНОЕ <Chevron /></a></li>
        <li><a href="#contacts" aria-current="page" className="font-normal text-[#5cdcfa]">КОНТАКТЫ</a></li>
      </ul>
    </nav>
  );
}

function ContactBlock({ title, icon, children }: { title: string; icon?: React.ReactNode; children: React.ReactNode }) {
  return (
    <div>
      <h2 className="flex items-center text-[22px] leading-6 font-light text-[#222]">
        {icon && <span className="w-[34px] pt-[3px] text-[#00a0e0]">{icon}</span>}
        {title}
      </h2>
      <div className="mt-[21px] text-[14px] leading-[14px] font-light text-[#444]">{children}</div>
    </div>
  );
}

function Main() {
  return (
    <main className={`${container} relative flex gap-[30px] px-[15px] py-[60px]`}>
      <div className="flex-1"><MapPanel /></div>
      <aside className="flex w-[262px] flex-col gap-[42px] pt-[5px]">
        <ContactBlock title="Организация:">ООО "Правовой источник"</ContactBlock>
        <ContactBlock title="Адрес:" icon={<svg width="12" height="19" fill="none" stroke="currentColor"><path d="M6,18 Q.5,10 .5,6.500 a5.500,5.500 0 0 1 11,0 Q11.500,10 6,18Z" /><circle cx="6" cy="6.500" r="3" /></svg>}>
          115612, г. Москва, Братеевская улица, д. 25 к. 3
        </ContactBlock>
        <ContactBlock title="E-mail:" icon={<svg width="16" height="11" fill="none" stroke="currentColor"><path d="M.5,.5 h15 v10 h-15z L8,7 L15.500,.5 M.5,10.500 L6,5.500 M15.500,10.500 L10,5.500" /></svg>}>
          <a href="mailto:pochta@legalsource.ru" className="text-[#00819c]">pochta@legalsource.ru</a>
        </ContactBlock>
        <ContactBlock title="Телефон:" icon={<svg width="16" height="16" viewBox="0 0 16 16" fill="none" stroke="currentColor"><path d="M.5,3 Q.5,1.500 2,.7 Q3,.3 3.700,1.200 L5.300,3.700 Q5.700,4.500 5,5.200 L4.300,6 Q6,9.500 9.700,11.700 L10.700,11 Q11.500,10.500 12.300,11 L15,12.500 Q15.800,13.200 15.200,14 Q14,15.800 12,15.500 Q2,13 .5,3Z" /></svg>}>
          +7 (495) 664-31-59;+7 (965) 36-777-69
        </ContactBlock>
      </aside>
    </main>
  );
}

function Footer() {
  const links = ["О КОМПАНИИ", "УСЛУГИ И ЦЕНЫ", "ОТЗЫВЫ", "СОТРУДНИЧЕСТВО", "КОНТАКТЫ"];
  return (
    <footer className="flex flex-col items-center bg-[#008bd2] pt-[30px] pb-8 text-white">
      <div className="flex items-start gap-7">
        <Logo light />
        <div>
          <p className="text-[14px] leading-4 italic">мы в социальных сетях:</p>
          <div className="mt-[3px] flex gap-[3px]">
            <a href="#vk" aria-label="ВКонтакте" className="flex h-[30px] w-[30px] items-center justify-center border border-white"><FaVk size={20} /></a>
            <a href="#fb" aria-label="Facebook" className="flex h-[30px] w-[30px] items-center justify-center border border-white">
              <svg width="20" height="20" fill="none"><rect width="20" height="20" rx="2" fill="#fff" /><path d="M17,4.500 H15 Q12.500,4.500 12.500,7 V20 M9,10.500 H16.500" stroke="#008bd2" strokeWidth="3" /></svg>
            </a>
            <a href="#prof" className="ml-px flex h-[30px] w-[184px] items-center justify-center border border-white text-[19px] leading-none font-black">Профессионалы.ru</a>
          </div>
        </div>
      </div>
      <ul className="mt-[10px] flex items-center text-[14px] leading-5 font-medium whitespace-nowrap">
        {links.map((l, i) => (
          <li key={l} className="flex items-center">
            {i > 0 && <span className="mr-[14px] ml-[9px] h-3 w-px bg-white" />}
            <a href="#footer">{l}</a>
          </li>
        ))}
      </ul>
      <hr className="mt-[16px] h-[2px] w-[750px] border-0 bg-[#007fc4]" />
      <p className="mt-[15px] text-[14px] leading-5 font-light text-[#46ddf8]">© 2015 Все права защищены. Копирование материалов с сайта запрещено.</p>
    </footer>
  );
}

export default function App() {
  return (
    <div className="min-h-screen overflow-hidden bg-white px-[49px] pt-[26px] pb-[70px] font-[Roboto,sans-serif]">
      <div className="rounded-t-[5px] shadow-[0_0_0_1px_rgba(0,0,0,0.3),0_20px_42px_rgba(0,0,0,0.65)]">
        <BrowserBar />
        <div className="relative overflow-hidden bg-white">
          <div className="relative w-[calc(100%+17px)]">
            <Header />
            <Nav />
            <section className="flex h-[100px] flex-col items-center bg-[#f6f6f6] pt-[20px] shadow-[inset_0_-3px_3px_rgba(0,0,0,0.07)]">
              <h1 className="text-[25px] leading-7 text-[#333]">Контакты</h1>
              <ol className="mt-[8px] flex text-[14px] leading-5 font-light text-[#999]">
                <li><a href="#home" className="text-[#333] underline">Главная</a></li>
                <li aria-hidden="true" className="px-[6px] text-[#bbb]">/</li>
                <li aria-current="page" className="pl-[2px]">Контакты</li>
              </ol>
            </section>
            <div className="relative">
              <Main />
              <button aria-label="Наверх" className="absolute right-[40px] bottom-[61px] flex h-9 w-9 items-center justify-center rounded-[3px] bg-[#e2e2e2] text-white">
                <FaAngleDoubleUp size={14} />
              </button>
            </div>
            <Footer />
          </div>
        </div>
      </div>
    </div>
  );
}
